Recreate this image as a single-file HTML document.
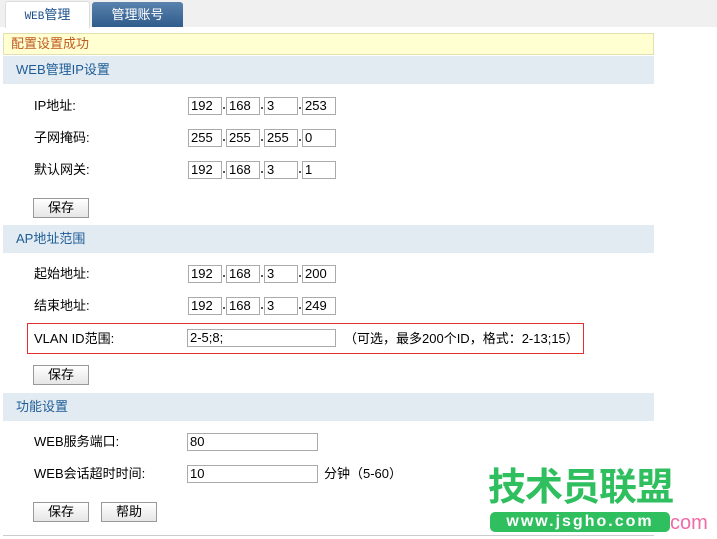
<!DOCTYPE html>
<html><head><meta charset="utf-8"><style>
*{margin:0;padding:0;box-sizing:border-box}
body{width:717px;height:539px;background:#fff;position:relative;overflow:hidden;font-family:"Liberation Sans","Noto Sans CJK SC",sans-serif;font-size:12px;color:#000}
.a{position:absolute}
.tabbar{left:0;top:0;width:717px;height:27px;background:#f0f0f0}
.t1{left:5px;top:1px;width:85px;height:27px;background:#fff;border:1px solid #ddd;border-bottom:none;border-radius:3px 3px 0 0;color:#1a4f8a;font-size:13px;text-align:center;line-height:26px}
.t2{left:92px;top:2px;width:91px;height:25px;background:linear-gradient(#5a82ad,#2f5c8c);border-radius:3px 3px 0 0;color:#fff;font-size:13px;text-align:center;line-height:25px}
.note{left:3px;top:33px;width:651px;height:22px;background:#ffffd2;border:1px solid #e0e0b0;color:#c05a20;font-size:13px;line-height:20px;padding-left:7px}
.hd{left:3px;width:651px;height:28px;background:#e3ebf2;color:#1d5c96;font-size:13px;line-height:28px;padding-left:13px}
.lb{left:34px;font-size:13px;line-height:16px}
.ip{height:18px;border:1px solid #aaa;background:#fff;font-size:13px;line-height:16px;padding-left:2px;width:34px}
.dot{width:2px;height:2px;background:#555}
.btn{height:20px;width:56px;border:1px solid #999;background:linear-gradient(#fff,#e6e6e6);text-align:center;line-height:18px;font-size:13px}
</style></head><body>
<div class="a tabbar"></div>
<div class="a t1"><span style="font-family:'Liberation Mono',monospace;font-size:11px">WEB</span>管理</div>
<div class="a t2">管理账号</div>
<div class="a note">配置设置成功</div>
<div class="a hd" style="top:56px">WEB管理IP设置</div>
<div class="a lb" style="top:98px">IP地址:</div>
<div class="a lb" style="top:130px">子网掩码:</div>
<div class="a lb" style="top:162px">默认网关:</div>
<div class="a hd" style="top:225px">AP地址范围</div>
<div class="a lb" style="top:266px">起始地址:</div>
<div class="a lb" style="top:298px">结束地址:</div>
<div class="a" style="left:27px;top:323px;width:557px;height:31px;border:1px solid #e53030"></div>
<div class="a lb" style="top:331px">VLAN ID范围:</div>
<div class="a ip" style="left:187px;top:329px;width:149px">2-5;8;</div>
<div class="a" style="left:344px;top:331px;line-height:16px;font-size:13px">（可选，最多200个ID，格式：2-13;15）</div>
<div class="a btn" style="left:33px;top:198px">保存</div>
<div class="a btn" style="left:33px;top:365px">保存</div>
<div class="a hd" style="top:393px">功能设置</div>
<div class="a lb" style="top:434px">WEB服务端口:</div>
<div class="a lb" style="top:466px">WEB会话超时时间:</div>
<div class="a ip" style="left:187px;top:433px;width:131px">80</div>
<div class="a ip" style="left:187px;top:465px;width:131px">10</div>
<div class="a" style="left:324px;top:466px;line-height:16px;font-size:13px">分钟（5-60）</div>
<div class="a btn" style="left:33px;top:502px">保存</div>
<div class="a btn" style="left:101px;top:502px">帮助</div>
<div class="a" style="left:3px;top:535px;width:651px;height:1px;background:#ccc"></div>
<div id="ips"></div>
<div class="a" style="left:488px;top:466px;color:#2fbf5f;font-size:38px;font-weight:bold;line-height:44px;letter-spacing:-1px">技术员联盟</div>
<div class="a" style="left:490px;top:512px;width:180px;height:20px;background:#2fbf5f;border-radius:5px;color:#fff;font-size:16px;font-weight:bold;text-align:center;line-height:20px;letter-spacing:2px">www.jsgho.com</div>
<div class="a" style="left:670px;top:512px;color:#f06aa8;font-size:20px;line-height:22px">com</div>
<script>
var rows=[[97,["192","168","3","253"]],[129,["255","255","255","0"]],[161,["192","168","3","1"]],[265,["192","168","3","200"]],[297,["192","168","3","249"]]];
var xs=[188,226,264,302],h="";
rows.forEach(function(r){for(var i=0;i<4;i++){h+='<div class="a ip" style="left:'+xs[i]+'px;top:'+r[0]+'px">'+r[1][i]+'</div>';if(i<3)h+='<div class="a dot" style="left:'+(xs[i]+35)+'px;top:'+(r[0]+10)+'px"></div>';}});
document.getElementById("ips").innerHTML=h;
</script>
</body></html>
